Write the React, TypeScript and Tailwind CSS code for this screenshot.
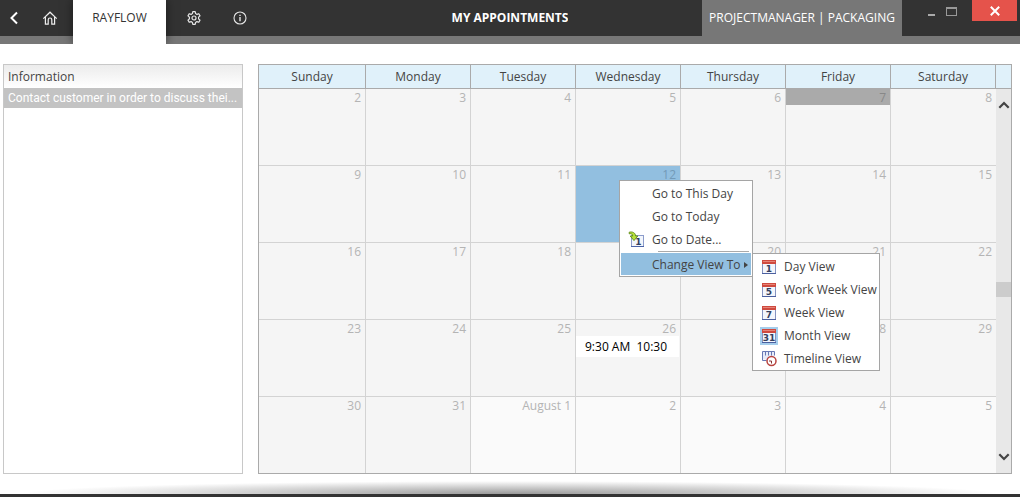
import { type ReactNode } from "react";
import clsx from "clsx";

interface DayCell {
  label: string;
  key: string;
  nextMonth?: boolean;
  today?: boolean;
  selected?: boolean;
  appointment?: string;
}

const WEEKDAYS = [
  "Sunday",
  "Monday",
  "Tuesday",
  "Wednesday",
  "Thursday",
  "Friday",
  "Saturday",
];

const FIRST_DAY = 2;
const DAYS_IN_MONTH = 31;

const WEEKS: DayCell[][] = Array.from({ length: 5 }, (_, week) =>
  Array.from({ length: 7 }, (_, day) => {
    const n = FIRST_DAY + week * 7 + day;
    const nextMonth = n > DAYS_IN_MONTH;
    const date = nextMonth ? n - DAYS_IN_MONTH : n;
    return {
      key: `d${n}`,
      label: nextMonth && date === 1 ? "August 1" : String(date),
      nextMonth,
      today: n === 7,
      selected: n === 12,
      appointment: n === 26 ? "9:30 AM  10:30" : undefined,
    };
  }),
);

function BackIcon() {
  return (
    <svg width="16" height="16" viewBox="0 0 16 16" fill="none" stroke="#fff" strokeWidth="2">
      <path d="M11 2.5 5.5 8l5.5 5.5" />
    </svg>
  );
}

function HomeIcon() {
  return (
    <svg width="16" height="16" viewBox="0 0 16 16" fill="none" stroke="#eee" strokeWidth="1.2">
      <path d="M1.3 8.6 8 2.2l6.7 6.4" />
      <path d="M3.4 7v7.2h2.8V9.8a1.8 1.8 0 0 1 3.6 0v4.4h2.8V7" />
    </svg>
  );
}

function GearIcon() {
  return (
    <svg width="16" height="16" viewBox="0 0 16 16" fill="none" stroke="#e6e6e6" strokeWidth="1.2" strokeLinejoin="round">
      <path d="M6.8 1.7h2.4l.4 1.9 1.3.8 1.9-.7L14 5.8l-1.4 1.3v1.8l1.4 1.3-1.2 2.1-1.9-.7-1.3.8-.4 1.9H6.8l-.4-1.9-1.3-.8-1.9.7L2 10.2l1.4-1.3V7.1L2 5.8l1.2-2.1 1.9.7 1.3-.8z" />
      <circle cx="8" cy="8" r="2" />
    </svg>
  );
}

function InfoIcon() {
  return (
    <svg width="16" height="16" viewBox="0 0 16 16" fill="none" stroke="#e6e6e6" strokeWidth="1.1">
      <circle cx="8" cy="8" r="6" />
      <path d="M8 7v4.2M8 4.7V6" strokeWidth="1.4" />
    </svg>
  );
}

function ChevronIcon({ down }: { down?: boolean }) {
  return (
    <svg width="12" height="8" viewBox="0 0 12 8" fill="none" stroke="#444" strokeWidth="2.2">
      <path d={down ? "M1.3 1.3 6 6l4.7-4.7" : "M1.3 6.7 6 2l4.7 4.7"} />
    </svg>
  );
}

function CalendarIcon({ text, active }: { text: string; active?: boolean }) {
  return (
    <svg width="18" height="18" viewBox="0 0 18 18">
      {active && <rect width="18" height="18" fill="#a5cdec" />}
      <rect x="2.5" y="3.5" width="13" height="12" fill="#f3f6fc" stroke="#8593c0" />
      <path d="M2 15.5h14" stroke="#4b5f9f" />
      <rect x="2" y="2" width="14" height="4" fill="#cf4a3f" />
      <path d="M3 3.5h12" stroke="#e68478" />
      <text
        x="9"
        y="14"
        textAnchor="middle"
        fontSize="9"
        fontWeight="bold"
        fill="#33405f"
        fontFamily="DejaVu Sans, sans-serif"
      >
        {text}
      </text>
    </svg>
  );
}

function GoToDateIcon() {
  return (
    <svg width="18" height="18" viewBox="0 0 18 18">
      <rect x="3.5" y="4.5" width="12" height="11" fill="#f3f6fc" stroke="#8c9ccb" />
      <path d="M3 15.5h13" stroke="#4b64a8" />
      <text x="10.5" y="14" textAnchor="middle" fontSize="9" fontWeight="bold" fill="#33405f" fontFamily="DejaVu Sans, sans-serif">
        1
      </text>
      <path d="M1.2 1.2C4.5.4 7.4 1.7 7.6 5h2.2L6 9.6 2.2 5h2.5c0-1.9-1.4-2.6-3.5-2.2z" fill="#b7e03a" stroke="#5e8a17" strokeWidth=".9" />
    </svg>
  );
}

function TimelineIcon() {
  return (
    <svg width="18" height="18" viewBox="0 0 18 18" fill="none">
      <path d="M2.5 1.5h12v8h-12z" fill="#e6ebf8" />
      <path d="M2.5 10.5v-9h12v4M5.5 1.5v4M8.5 1.5v4M11.5 1.5v4M2.5 10.5h4" stroke="#6879b4" />
      <circle cx="11.5" cy="11" r="4.5" fill="#fff" stroke="#b8433f" strokeWidth="1.5" />
      <path d="M9 11h2.5v2.5" stroke="#873030" />
    </svg>
  );
}

function NavButton({ label, className, children }: { label: string; className: string; children: ReactNode }) {
  return (
    <button aria-label={label} className={clsx("flex h-9 items-center justify-center", className)}>
      {children}
    </button>
  );
}

function Header() {
  return (
    <header className="flex h-11 items-start overflow-hidden bg-[#777]">
      <nav className="flex h-9 flex-1 basis-0 bg-[#333]">
        <NavButton label="Back" className="w-7">
          <BackIcon />
        </NavButton>
        <NavButton label="Home" className="w-[45px] pr-px">
          <HomeIcon />
        </NavButton>
        <a
          href="#rayflow"
          className="flex h-11 w-[93px] items-center justify-center bg-white pb-2 text-[#333] shadow-[0_0_10px_rgba(0,0,0,0.5)]"
        >
          RAYFLOW
        </a>
        <NavButton label="Settings" className="w-14">
          <GearIcon />
        </NavButton>
        <NavButton label="About" className="w-9">
          <InfoIcon />
        </NavButton>
      </nav>
      <h1 className="flex h-9 items-center bg-[#333] font-bold text-white">MY APPOINTMENTS</h1>
      <div className="flex h-9 flex-1 basis-0 justify-end bg-[#333]">
        <div className="flex w-[200px] items-center justify-center bg-[#777] whitespace-nowrap text-white">
          PROJECTMANAGER | PACKAGING
        </div>
        <div className="flex items-start pr-[3px] pl-5">
          <button aria-label="Minimize" className="flex h-6 w-[19px] items-center justify-center pt-1.5">
            <span className="h-0.5 w-[7px] bg-[#aaa]" />
          </button>
          <button aria-label="Maximize" className="flex h-[23px] w-5 items-center justify-center">
            <span className="h-[9px] w-[11px] border border-t-2 border-[#999]" />
          </button>
          <button aria-label="Close" className="ml-[11px] flex h-[21px] w-[45px] items-center justify-center bg-[#e5534b]">
            <svg width="10" height="10" viewBox="0 0 10 10" stroke="#fff" strokeWidth="2">
              <path d="m.8.8 8.4 8.4M9.2.8.8 9.2" />
            </svg>
          </button>
        </div>
      </div>
    </header>
  );
}

function InformationList() {
  return (
    <section className="w-60 shrink-0 border border-[#c8c8c8] bg-white">
      <table className="w-full table-fixed border-collapse">
        <thead>
          <tr>
            <th className="h-[23px] bg-linear-to-b from-[#ececec] to-white px-1 text-left font-normal text-[#444]">
              Information
            </th>
          </tr>
        </thead>
        <tbody>
          <tr>
            <td className="h-5 bg-[#c3c3c3] px-1 font-[Roboto,sans-serif] whitespace-nowrap text-white">
              Contact customer in order to discuss thei...
            </td>
          </tr>
        </tbody>
      </table>
    </section>
  );
}

function MenuItem({
  label,
  icon,
  className,
  children,
}: {
  label: string;
  icon?: ReactNode;
  className?: string;
  children?: ReactNode;
}) {
  return (
    <button role="menuitem" className={clsx("flex items-center text-left whitespace-nowrap", className)}>
      <span className="flex w-6 shrink-0">{icon}</span>
      {label}
      {children}
    </button>
  );
}

function ContextMenu() {
  return (
    <div
      role="menu"
      className="absolute top-[14px] left-[43px] z-10 flex w-[134px] flex-col border border-[#a5a5a5] bg-white py-px text-[#444]"
    >
      <MenuItem label="Go to This Day" className="h-[23px] pl-2" />
      <MenuItem label="Go to Today" className="h-[23px] pl-2" />
      <MenuItem label="Go to Date..." icon={<GoToDateIcon />} className="h-[23px] pl-2" />
      <div className="mr-[3px] mb-px ml-[38px] h-px bg-[#aaa]" />
      <MenuItem label="Change View To" className="mx-px h-[22px] bg-[#92bfe0] pt-0.5 pl-[7px]">
        <svg width="4" height="6" viewBox="0 0 4 6" className="mr-[3px] ml-auto">
          <path d="M0 0l4 3-4 3z" fill="#444" />
        </svg>
      </MenuItem>
      <div
        role="menu"
        className="absolute top-[72px] left-[132px] flex w-32 flex-col border border-[#a5a5a5] bg-white pt-px text-[#444]"
      >
        <MenuItem label="Day View" icon={<CalendarIcon text="1" />} className="h-[23px] pl-[7px]" />
        <MenuItem label="Work Week View" icon={<CalendarIcon text="5" />} className="h-[23px] pl-[7px]" />
        <MenuItem label="Week View" icon={<CalendarIcon text="7" />} className="h-[23px] pl-[7px]" />
        <MenuItem label="Month View" icon={<CalendarIcon text="31" active />} className="h-[23px] pl-[7px]" />
        <MenuItem label="Timeline View" icon={<TimelineIcon />} className="h-[23px] pl-[7px]" />
      </div>
    </div>
  );
}

function Day({ day, lastRow }: { day: DayCell; lastRow: boolean }) {
  return (
    <td
      className={clsx(
        "relative border-r border-[#d3d3d3] p-0 align-top last:border-r-0",
        lastRow ? "h-[76px]" : "h-[77px] border-b",
        day.selected ? "bg-[#92bfe0]" : day.nextMonth ? "bg-[#fafafa]" : "bg-[#f5f5f5]",
      )}
    >
      <div
        className={clsx(
          "h-4 pr-1 text-right leading-[18px]",
          day.today && "bg-[#aaa] text-[#888]",
          day.selected && "text-[#729ab8]",
          !day.today && !day.selected && "text-[#b4b4b4]",
        )}
      >
        {day.label}
      </div>
      {day.appointment && (
        <div className="mr-px h-[21px] bg-white pl-[9px] leading-[22px] whitespace-pre text-black">
          {day.appointment}
        </div>
      )}
      {day.selected && <ContextMenu />}
    </td>
  );
}

function ScrollBar() {
  return (
    <div className="flex w-[15px] shrink-0 flex-col">
      <div className="h-6 shrink-0 border-b border-[#aaa] bg-[#e0f1fa]" />
      <div className="flex flex-1 flex-col bg-[#e8e8e8]">
        <button aria-label="Scroll up" className="flex h-8 items-center justify-center">
          <ChevronIcon />
        </button>
        <div className="grow-[161]" />
        <div className="h-[15px] bg-[#ccc]" />
        <div className="grow-[144]" />
        <button aria-label="Scroll down" className="flex h-8 items-center justify-center">
          <ChevronIcon down />
        </button>
      </div>
    </div>
  );
}

function MonthCalendar() {
  return (
    <section className="flex flex-1 border border-[#aaa]">
      <div className="flex-1">
        <table className="h-full w-full table-fixed border-separate border-spacing-0">
          <thead>
            <tr>
              {WEEKDAYS.map((name) => (
                <th
                  key={name}
                  className="h-6 border-r border-b border-[#aaa] bg-[#e0f1fa] p-0 font-normal text-[#444] first:w-[107px]"
                >
                  {name}
                </th>
              ))}
            </tr>
          </thead>
          <tbody>
            {WEEKS.map((week, i) => (
              <tr key={i}>
                {week.map((day) => (
                  <Day key={day.key} day={day} lastRow={i === WEEKS.length - 1} />
                ))}
              </tr>
            ))}
          </tbody>
        </table>
      </div>
      <ScrollBar />
    </section>
  );
}

export default function App() {
  return (
    <div className="flex min-h-screen flex-col bg-white font-['Open_Sans','Noto_Sans',sans-serif] text-[12px] leading-4">
      <Header />
      <main className="flex flex-1 gap-[15px] pt-5 pr-2 pb-[7px] pl-[3px]">
        <InformationList />
        <MonthCalendar />
      </main>
      <footer>
        <div className="h-[13px] bg-[radial-gradient(48%_100%_at_50%_100%,#999,#fff)]" />
        <div className="h-[3px] bg-[#333]" />
      </footer>
    </div>
  );
}
